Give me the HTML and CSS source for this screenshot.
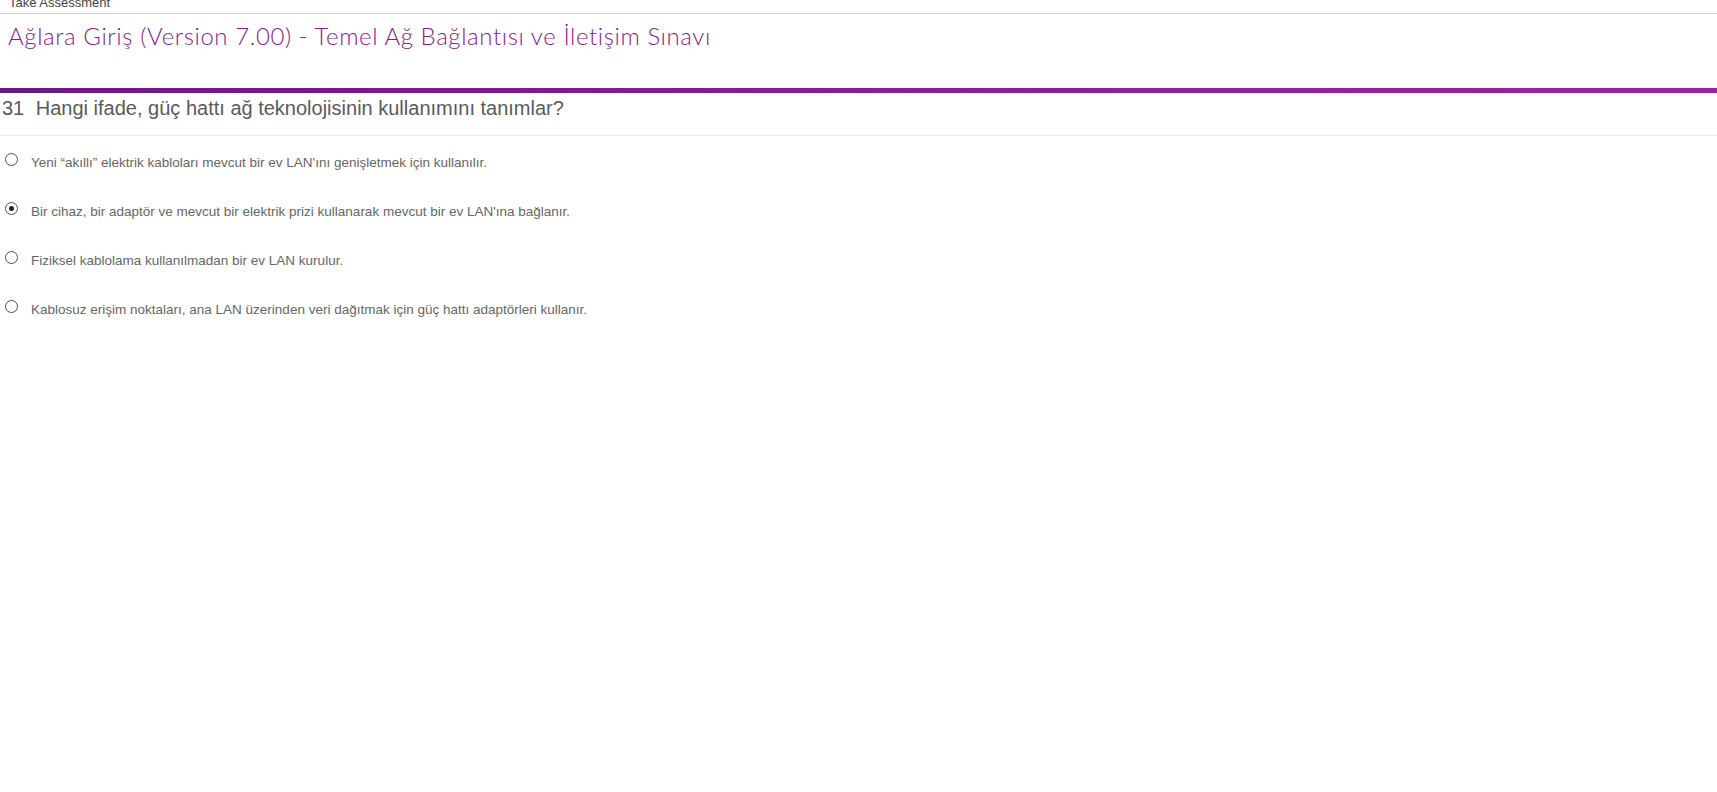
FILE: index.html
```html
<!DOCTYPE html>
<html lang="tr">
<head>
<meta charset="utf-8">
<title>Take Assessment</title>
<link rel="stylesheet" href="styles.css">
</head>
<body>
<div class="topbar"><span class="topbar-text">Take Assessment</span></div>
<header class="exam-header">
  <h1 class="exam-title">Ağlara Giriş (Version 7.00) - Temel Ağ Bağlantısı ve İletişim Sınavı</h1>
</header>
<div class="accent-bar"></div>
<main class="question">
  <h2 class="question-text"><span class="q-num">31</span> Hangi ifade, güç hattı ağ teknolojisinin kullanımını tanımlar?</h2>
  <ul class="options">
    <li class="option"><label><input type="radio" name="q31" class="radio"><span class="opt-text">Yeni “akıllı” elektrik kabloları mevcut bir ev LAN'ını genişletmek için kullanılır.</span></label></li>
    <li class="option"><label><input type="radio" name="q31" class="radio" checked><span class="opt-text">Bir cihaz, bir adaptör ve mevcut bir elektrik prizi kullanarak mevcut bir ev LAN'ına bağlanır.</span></label></li>
    <li class="option"><label><input type="radio" name="q31" class="radio"><span class="opt-text">Fiziksel kablolama kullanılmadan bir ev LAN kurulur.</span></label></li>
    <li class="option"><label><input type="radio" name="q31" class="radio"><span class="opt-text">Kablosuz erişim noktaları, ana LAN üzerinden veri dağıtmak için güç hattı adaptörleri kullanır.</span></label></li>
  </ul>
</main>
</body>
</html>
```
FILE: styles.css
```css
html, body {
  margin: 0;
  padding: 0;
  background: #ffffff;
}

body {
  font-family: "Liberation Sans", Arial, sans-serif;
  width: 1717px;
}

.topbar {
  height: 14px;
  border-bottom: 1px solid #cccccc;
  overflow: hidden;
  padding-left: 9px;
  box-sizing: border-box;
}

.topbar-text {
  display: block;
  margin-top: -5px;
  font-size: 13px;
  line-height: 15px;
  color: #444444;
}

.exam-header {
  height: 74px;
  box-sizing: border-box;
  padding: 5px 0 0 8px;
}

.exam-title {
  margin: 0;
  font-family: "Lato", "Liberation Sans", sans-serif;
  font-weight: 300;
  font-size: 24px;
  letter-spacing: 0.58px;
  line-height: 34px;
  color: #851d8c;
}

.accent-bar {
  height: 5px;
  background: linear-gradient(to right, #6a1a7e 0%, #8a2190 60%, #9c2496 100%);
}

.question-text {
  margin: 0;
  padding: 3px 0 15px 2px;
  font-size: 20px;
  font-weight: 400;
  line-height: 24px;
  color: #5a5a5c;
  border-bottom: 1px solid #ececec;
}

.q-num {
  margin-right: 6px;
}

.options {
  list-style: none;
  margin: 0;
  padding: 2px 0 0 0;
}

.option label {
  display: flex;
  align-items: center;
  height: 49px;
}

.radio {
  appearance: none;
  -webkit-appearance: none;
  width: 13px;
  height: 13px;
  margin: 0 13px 6px 5px;
  border: 1px solid #4e4e4e;
  border-radius: 50%;
  box-sizing: border-box;
  background: #ffffff;
  display: flex;
  align-items: center;
  justify-content: center;
  flex: none;
}

.radio:checked::after {
  content: "";
  width: 5px;
  height: 5px;
  border-radius: 50%;
  background: #222222;
}

.opt-text {
  font-size: 13.5px;
  line-height: 15px;
  color: #666666;
}
```
